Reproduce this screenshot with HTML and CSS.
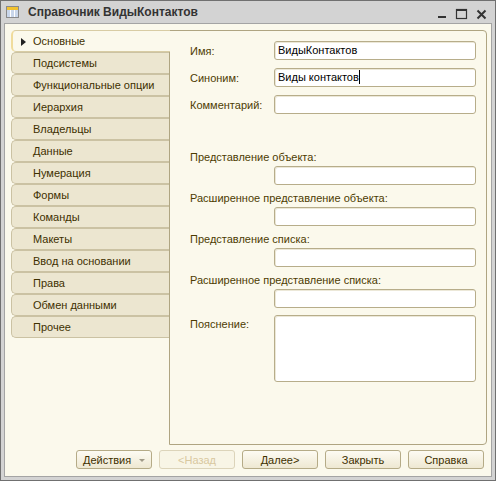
FILE: index.html
```html
<!DOCTYPE html>
<html lang="ru">
<head>
    <meta charset="UTF-8">
    <title>Справочник ВидыКонтактов</title>
    <link rel="stylesheet" href="styles.css">
</head>
<body>
    <div class="window">
        <div class="titlebar">
            <svg class="app-icon" width="13" height="12" viewBox="0 0 13 12">
                <rect x="0.5" y="0.5" width="12" height="11" fill="#fff" stroke="#8a8a8a"/>
                <rect x="1" y="1" width="11" height="3" fill="#f2c230"/>
                <rect x="1" y="4" width="3" height="7" fill="#c9d6ea"/>
                <rect x="5" y="4" width="3" height="7" fill="#c9d6ea"/>
                <rect x="9" y="4" width="3" height="7" fill="#c9d6ea"/>
            </svg>
            <span class="title">Справочник ВидыКонтактов</span>
            <svg class="controls" width="50" height="22" viewBox="0 0 50 22">
                <rect x="1" y="15" width="8" height="2" fill="#333"/>
                <rect x="19.5" y="8.5" width="10" height="9" fill="none" stroke="#333" stroke-width="1.2"/>
                <rect x="19" y="8" width="11" height="2" fill="#333"/>
                <path d="M40.5 9.5 L48.5 17.5 M48.5 9.5 L40.5 17.5" stroke="#333" stroke-width="2"/>
            </svg>
        </div>

        <div class="body">
            <div class="main">
                <ul class="tabs">
                    <li class="tab active"><span class="marker"></span>Основные</li>
                    <li class="tab">Подсистемы</li>
                    <li class="tab">Функциональные опции</li>
                    <li class="tab">Иерархия</li>
                    <li class="tab">Владельцы</li>
                    <li class="tab">Данные</li>
                    <li class="tab">Нумерация</li>
                    <li class="tab">Формы</li>
                    <li class="tab">Команды</li>
                    <li class="tab">Макеты</li>
                    <li class="tab">Ввод на основании</li>
                    <li class="tab">Права</li>
                    <li class="tab">Обмен данными</li>
                    <li class="tab">Прочее</li>
                </ul>

                <div class="panel">
                    <div class="row">
                        <span class="label">Имя:</span>
                        <div class="field">ВидыКонтактов</div>
                    </div>
                    <div class="row">
                        <span class="label">Синоним:</span>
                        <div class="field">Виды контактов<span class="caret"></span></div>
                    </div>
                    <div class="row last">
                        <span class="label">Комментарий:</span>
                        <div class="field"></div>
                    </div>

                    <div class="stack">
                        <span class="label">Представление объекта:</span>
                        <div class="field"></div>
                    </div>
                    <div class="stack">
                        <span class="label">Расширенное представление объекта:</span>
                        <div class="field"></div>
                    </div>
                    <div class="stack">
                        <span class="label">Представление списка:</span>
                        <div class="field"></div>
                    </div>
                    <div class="stack">
                        <span class="label">Расширенное представление списка:</span>
                        <div class="field"></div>
                    </div>

                    <div class="row note">
                        <span class="label">Пояснение:</span>
                        <div class="field area"></div>
                    </div>
                </div>
            </div>

            <div class="buttons">
                <button type="button" class="btn menu">Действия<span class="arrow"></span></button>
                <button type="button" class="btn" disabled>&lt;Назад</button>
                <button type="button" class="btn">Далее&gt;</button>
                <button type="button" class="btn">Закрыть</button>
                <button type="button" class="btn">Справка</button>
            </div>
        </div>
    </div>
</body>
</html>
```

FILE: styles.css
```css
html, body {
    margin: 0;
    padding: 0;
}

body {
    width: 496px;
    height: 481px;
    font-family: "Liberation Sans", Arial, sans-serif;
    font-size: 11px;
}

.window {
    box-sizing: border-box;
    width: 496px;
    height: 481px;
    border: 1px solid #707070;
    background-color: #d3d3d3;
    display: flex;
    flex-direction: column;
}

.titlebar {
    height: 22px;
    display: flex;
    align-items: center;
    padding-left: 5px;
    padding-right: 8px;
}

.app-icon {
    margin-right: 9px;
}

.title {
    font-weight: bold;
    font-size: 12px;
    color: #333;
}

.controls {
    margin-left: auto;
}

.body {
    flex: 1;
    margin: 0 3px 3px 3px;
    border: 1px solid #a4a4a4;
    background-color: #fbf9ec;
    padding: 6px 4px 7px 6px;
    display: flex;
    flex-direction: column;
}

.main {
    flex: 1;
    display: flex;
}

/* вкладки слева */
.tabs {
    list-style: none;
    margin: 0;
    padding: 0;
    width: 158px;
    flex-shrink: 0;
}

.tab {
    box-sizing: border-box;
    height: 22px;
    line-height: 20px;
    padding-left: 21px;
    background-color: #ece6d0;
    border: 1px solid #cbc2a3;
    border-right: none;
    border-radius: 5px 0 0 5px;
    color: #3e3000;
    white-space: nowrap;
}

.tab.active {
    position: relative;
    width: 159px;
    background-color: #fbf9ec;
    border-color: #d8cca4;
    border-left: 2px solid #f0dc9c;
    padding-left: 8px;
    z-index: 1;
}

.marker {
    display: inline-block;
    width: 0;
    height: 0;
    border-top: 4px solid transparent;
    border-bottom: 4px solid transparent;
    border-left: 5px solid #222;
    margin-right: 7px;
    vertical-align: -1px;
}

.panel {
    flex: 1;
    border: 1px solid #afa582;
    border-radius: 0 4px 4px 0;
    padding: 10px 10px 0 20px;
}

.label {
    color: #4d3c02;
    white-space: nowrap;
}

.row {
    display: flex;
    align-items: center;
    margin-bottom: 8px;
}

.row .label {
    width: 84px;
    flex-shrink: 0;
}

.row.last {
    margin-bottom: 36px;
}

.stack {
    margin-bottom: 6px;
}

.stack .label {
    display: block;
    height: 14px;
    line-height: 14px;
    margin-bottom: 2px;
}

.stack .field {
    margin-left: 84px;
}

.stack:nth-of-type(7) {
    margin-bottom: 7px;
}

.field {
    box-sizing: border-box;
    flex: 1;
    height: 19px;
    line-height: 17px;
    padding-left: 3px;
    background-color: #fff;
    border: 1px solid #b7ad8a;
    border-radius: 3px;
    box-shadow: inset 1px 1px 0 #ece8d8;
    color: #000;
}

.caret {
    display: inline-block;
    width: 1px;
    height: 14px;
    background-color: #000;
    vertical-align: -3px;
}

.row.note {
    align-items: flex-start;
}

.row.note .label {
    padding-top: 3px;
}

.field.area {
    height: 67px;
}

/* кнопки внизу */
.buttons {
    display: flex;
    justify-content: flex-end;
    gap: 7px;
    margin-top: 5px;
    padding-right: 3px;
}

.btn {
    box-sizing: border-box;
    width: 76px;
    height: 19px;
    padding: 0;
    font-family: "Liberation Sans", Arial, sans-serif;
    font-size: 11px;
    color: #3e3000;
    background: linear-gradient(#fdfbf3, #eee8d2);
    border: 1px solid #b5ab87;
    border-radius: 3px;
}

.btn:disabled {
    color: #d8c8a0;
    border-color: #dcd4ba;
    background: #f8f5e6;
}

.btn.menu {
    text-align: left;
    padding-left: 6px;
    position: relative;
}

.arrow {
    position: absolute;
    right: 6px;
    top: 8px;
    width: 0;
    height: 0;
    border-left: 3px solid transparent;
    border-right: 3px solid transparent;
    border-top: 3px solid #a09a88;
}
```
